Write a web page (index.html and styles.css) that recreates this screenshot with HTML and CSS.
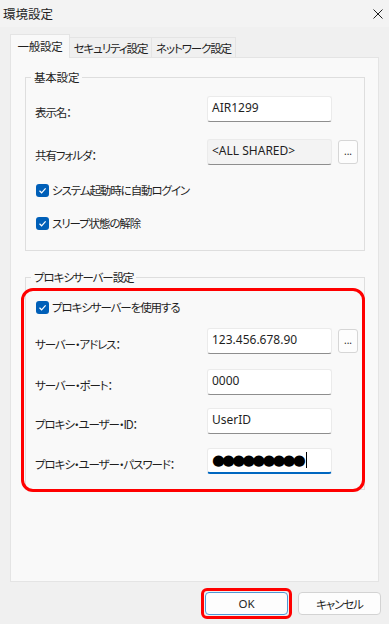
FILE: index.html
```html
<!DOCTYPE html>
<html lang="ja">
<head>
    <meta charset="UTF-8">
    <meta name="viewport" content="width=device-width, initial-scale=1.0">
    <title>環境設定</title>
    <link rel="stylesheet" href="styles.css">
</head>
<body>
    <!-- タイトルバー -->
    <div class="titlebar">
        <div class="title">環境設定</div>
        <div class="close-btn">
            <svg xmlns="http://www.w3.org/2000/svg" viewBox="0 0 10 10">
                <path d="M0.5 0.5L9.5 9.5M9.5 0.5L0.5 9.5"/>
            </svg>
        </div>
    </div>

    <!-- タブ -->
    <div class="tabs">
        <div class="tab tab-general active">一般設定</div>
        <div class="tab tab-security">セキュリティ設定</div>
        <div class="tab tab-network">ネットワーク設定</div>
    </div>

    <!-- タブの中身 -->
    <div class="panel">
        <fieldset class="group group-basic">
            <legend>基本設定</legend>
            <div class="row row-name">
                <div class="label">表示名：</div>
                <div class="field">AIR1299</div>
            </div>
            <div class="row row-folder">
                <div class="label">共有フォルダ：</div>
                <div class="field readonly">&lt;ALL SHARED&gt;</div>
                <div class="more-btn">...</div>
            </div>
            <div class="check check-login">
                <span class="box">
                    <svg xmlns="http://www.w3.org/2000/svg" viewBox="0 0 13 13">
                        <path d="M3.5 6.8L5.6 8.8L9.6 4.4"/>
                    </svg>
                </span>
                <span>システム起動時に自動ログイン</span>
            </div>
            <div class="check check-sleep">
                <span class="box">
                    <svg xmlns="http://www.w3.org/2000/svg" viewBox="0 0 13 13">
                        <path d="M3.5 6.8L5.6 8.8L9.6 4.4"/>
                    </svg>
                </span>
                <span>スリープ状態の解除</span>
            </div>
        </fieldset>

        <fieldset class="group group-proxy">
            <legend>プロキシサーバー設定</legend>
            <!-- 赤枠で囲んだ部分 -->
            <div class="highlight">
                <div class="check check-proxy">
                    <span class="box">
                        <svg xmlns="http://www.w3.org/2000/svg" viewBox="0 0 13 13">
                            <path d="M3.5 6.8L5.6 8.8L9.6 4.4"/>
                        </svg>
                    </span>
                    <span>プロキシサーバーを使用する</span>
                </div>
                <div class="row row-address">
                    <div class="label">サーバー・アドレス：</div>
                    <div class="field">123.456.678.90</div>
                    <div class="more-btn">...</div>
                </div>
                <div class="row row-port">
                    <div class="label">サーバー・ポート：</div>
                    <div class="field">0000</div>
                </div>
                <div class="row row-user">
                    <div class="label">プロキシ・ユーザー・ID：</div>
                    <div class="field">UserID</div>
                </div>
                <div class="row row-pass">
                    <div class="label">プロキシ・ユーザー・パスワード：</div>
                    <div class="field focused"><span class="dots">●●●●●●●●●</span><span class="caret"></span></div>
                </div>
            </div>
        </fieldset>
    </div>

    <!-- ボタン -->
    <div class="buttons">
        <div class="ok-wrap">
            <div class="btn default">OK</div>
        </div>
        <div class="btn">キャンセル</div>
    </div>
</body>
</html>
```

FILE: styles.css
```css
/* リセット */
* {
    margin: 0;
    padding: 0;
    box-sizing: border-box;
}

body {
    width: 389px;
    height: 624px;
    overflow: hidden;
    background-color: #f0f0f0;
    font-family: "Noto Sans CJK JP", sans-serif;
    font-size: 11.5px;
    font-feature-settings: "palt";
    letter-spacing: -1.1px;
    color: #1f1f1f;
}

/* タイトルバー */
.titlebar {
    display: flex;
    align-items: center;
    justify-content: space-between;
    height: 27px;
    padding: 0 6px 0 3px;
    background-color: #f3f3f3;
}

.title {
    font-size: 12.5px;
    letter-spacing: 0;
}

.close-btn svg {
    display: block;
    width: 10px;
    height: 10px;
    stroke: #1f1f1f;
    stroke-width: 1;
    fill: none;
}

/* タブ */
.tabs {
    display: flex;
    align-items: flex-end;
    height: 23px;
    margin-top: 7px;
    padding-left: 10px;
}

.tab {
    display: flex;
    align-items: center;
    justify-content: center;
    height: 20px;
    border: 1px solid #e4e4e4;
    border-bottom: none;
    background-color: #f0f0f0;
    margin-left: -1px;
}

.tab-general { width: 60px; }
.tab-security { width: 83px; }
.tab-network { width: 85px; }

.tab.active {
    position: relative;
    z-index: 1;
    height: 24px;
    margin-left: 0;
    margin-bottom: -1px;
    padding-bottom: 2px;
    background-color: #f9f9f9;
    letter-spacing: -0.3px;
}

/* タブの中身 */
.panel {
    height: 525px;
    margin: 0 10px;
    padding: 12px 13px 0 14px;
    background-color: #f9f9f9;
    border: 1px solid #e4e4e4;
}

.group {
    border: 1px solid #dedede;
    padding: 0;
    margin: 0;
}

.group legend {
    margin-left: 5px;
    padding: 0 3px;
    line-height: 14px;
}

.group-basic legend {
    letter-spacing: -0.2px;
}

.group-basic {
    padding-bottom: 17px;
}

.group-proxy {
    margin-top: 19px;
}

.row {
    display: flex;
    align-items: center;
    padding-left: 9px;
}

.label {
    width: 172px;
    padding-top: 5px;
    white-space: nowrap;
}

.field {
    width: 125px;
    height: 26px;
    padding: 3px 4px;
    line-height: 16px;
    background-color: #ffffff;
    border: 1px solid #ebebeb;
    border-bottom-color: #8e8e8e;
    border-radius: 3px;
    font-family: "Noto Sans", sans-serif;
    font-size: 12px;
    letter-spacing: 0;
    white-space: nowrap;
}

.field.readonly {
    background-color: #f3f3f3;
}

.field.focused {
    display: flex;
    align-items: center;
    padding-top: 1px;
    border-bottom: 2px solid #0067c0;
}

.dots {
    font-family: "DejaVu Sans", sans-serif;
    font-size: 15px;
    letter-spacing: -3px;
    color: #000000;
}

.caret {
    width: 1px;
    height: 16px;
    margin-left: 3px;
    background-color: #000000;
}

.more-btn {
    width: 20px;
    height: 24px;
    margin-left: 6px;
    border: 1px solid #d6d6d6;
    border-radius: 3px;
    background-color: #fdfdfd;
    font-family: "Noto Sans", sans-serif;
    font-size: 10px;
    letter-spacing: 0;
    line-height: 20px;
    text-align: center;
}

.check {
    display: flex;
    align-items: center;
    gap: 3px;
    height: 20px;
    padding-left: 10px;
}

.box {
    width: 13px;
    height: 13px;
    border-radius: 3px;
    background-color: #005fb8;
}

.box svg {
    display: block;
    width: 13px;
    height: 13px;
    stroke: #ffffff;
    stroke-width: 1.2;
    fill: none;
}

/* 各行の間隔 */
.row-name { margin-top: 12px; }
.row-folder { margin-top: 17px; }
.check-login { margin-top: 15px; }
.check-sleep { margin-top: 13px; }
.row-address { margin-top: 11px; }
.row-port { margin-top: 15px; }
.row-user { margin-top: 13px; }
.row-pass { margin-top: 14px; }

/* 赤枠 */
.highlight {
    margin: 4px -1px -3px -5px;
    padding: 6px 0 15px 2px;
    border: 3px solid #ff0000;
    border-radius: 12px;
}

/* ボタン */
.buttons {
    display: flex;
    align-items: center;
    justify-content: flex-end;
    gap: 6px;
    margin-top: 6px;
    padding-right: 8px;
}

.ok-wrap {
    padding: 1px;
    border: 3px solid #ff0000;
    border-radius: 6px;
}

.btn {
    display: flex;
    align-items: center;
    justify-content: center;
    width: 83px;
    height: 23px;
    border: 1px solid #d3d3d3;
    border-radius: 4px;
    background-color: #fdfdfd;
}

.btn.default {
    border-color: #4f97d6;
    font-family: "Noto Sans", sans-serif;
    letter-spacing: 0;
}
```
